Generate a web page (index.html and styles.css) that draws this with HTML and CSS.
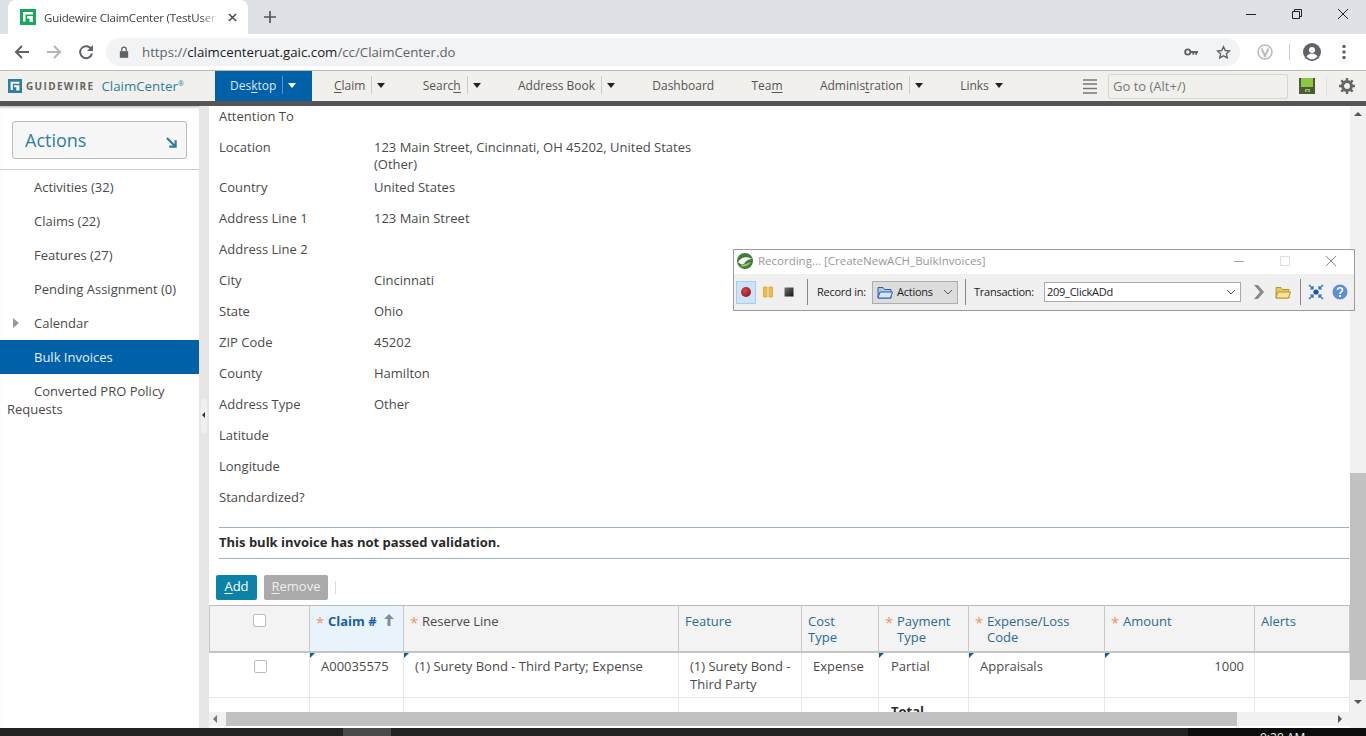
FILE: index.html
```html
<!DOCTYPE html>
<html lang="en">
<head>
    <meta charset="UTF-8">
    <title>Guidewire ClaimCenter</title>
    <link rel="stylesheet" href="styles.css">
</head>
<body>
    <div class="tabstrip">
        <div class="tab">
            <svg class="favicon" viewBox="0 0 16 16"><path fill="#17a85a" d="M0 0h16v16H0z"/><path fill="#fff" d="M3 3h10v2.500H5.500v7H3zM7 7h6v6H9.500V9.500H7z"/></svg>
            <span class="tab-title">Guidewire ClaimCenter (TestUser</span>
            <svg class="tab-close" viewBox="0 0 10 10"><path d="M1 1l8 8M9 1L1 9" stroke="#444" stroke-width="1.6"/></svg>
        </div>
        <svg class="new-tab" viewBox="0 0 12 12"><path d="M6 0v12M0 6h12" stroke="#555" stroke-width="1.7"/></svg>
        <div class="win-btns">
            <svg viewBox="0 0 12 12"><path d="M1 6.500h10" stroke="#222"/></svg>
            <svg viewBox="0 0 12 12"><path d="M1.500 3.500h7v7h-7zM3.500 3.500v-2h7v7h-2" fill="none" stroke="#222"/></svg>
            <svg viewBox="0 0 12 12"><path d="M1 1l10 10M11 1L1 11" stroke="#222"/></svg>
        </div>
    </div>

    <div class="toolbar">
        <svg class="tool-icon" viewBox="0 0 16 16"><path d="M15 8H2M8 2L2 8l6 6" fill="none" stroke="#5f6368" stroke-width="2"/></svg>
        <svg class="tool-icon" viewBox="0 0 16 16"><path d="M1 8h13M8 2l6 6-6 6" fill="none" stroke="#b4b6b9" stroke-width="2"/></svg>
        <svg class="tool-icon" viewBox="0 0 16 16"><path d="M13.500 5.500A6 6 0 1 0 14 9.500" fill="none" stroke="#5f6368" stroke-width="2"/><path fill="#5f6368" d="M15 1v6H9z"/></svg>
        <div class="omnibox">
            <svg class="lock" viewBox="0 0 12 14"><path fill="#5f6368" d="M1 6h10v8H1z"/><path d="M3.300 6V3.800a2.700 2.700 0 0 1 5.400 0V6" fill="none" stroke="#5f6368" stroke-width="1.500"/></svg>
            <span class="url">https://<b>claimcenteruat.gaic.com</b>/cc/ClaimCenter.do</span>
            <svg class="key" viewBox="0 0 16 10"><circle cx="4" cy="5" r="2.800" fill="none" stroke="#5f6368" stroke-width="2"/><path fill="#5f6368" d="M7 4h8v2h-1v2h-2V6h-1v2H9V6H7z"/></svg>
            <svg class="star" viewBox="0 0 16 16"><path d="M8 1.800l1.900 4.100 4.500.5-3.300 3 .9 4.400L8 11.600l-4 2.200.9-4.400-3.300-3 4.500-.5z" fill="none" stroke="#5f6368" stroke-width="1.500"/></svg>
        </div>
        <svg class="ext" viewBox="0 0 16 16"><circle cx="8" cy="8" r="7" fill="none" stroke="#bbb" stroke-width="1.500"/><path d="M4.500 4.500L8 12l3.500-7.500" fill="none" stroke="#bbb" stroke-width="2"/></svg>
        <span class="tool-sep"></span>
        <svg class="avatar" viewBox="0 0 18 18"><circle cx="9" cy="9" r="9" fill="#5f6368"/><circle cx="9" cy="7" r="3" fill="#fff"/><path fill="#fff" d="M3.500 13.500c1-2 3.500-3 5.500-3s4.500 1 5.500 3a7 7 0 0 1-11 0z"/></svg>
        <svg class="kebab" viewBox="0 0 4 14"><path fill="#5f6368" d="M.5 0h3v3h-3zM.5 5.500h3v3h-3zM.5 11h3v3h-3z"/></svg>
    </div>

    <nav class="appnav">
        <div class="brand">
            <svg class="brand-logo" viewBox="0 0 16 16"><path fill="#2d7d9f" d="M0 0h16v16H0z"/><path fill="#fff" d="M3 3h10v2.500H5.500v7H3zM7 7h6v6H9.500V9.500H7z"/></svg>
            <span class="brand-word">GUIDEWIRE</span>
            <span class="brand-product">ClaimCenter<sup>®</sup></span>
        </div>
        <div class="nav-tab">Des<u>k</u>top<span class="nav-sep"></span><span class="caret caret-white"></span></div>
        <div class="nav-items">
            <div class="nav-item"><u>C</u>laim<span class="nav-sep"></span><span class="caret"></span></div>
            <div class="nav-item">Searc<u>h</u><span class="nav-sep"></span><span class="caret"></span></div>
            <div class="nav-item">Address Book<span class="nav-sep"></span><span class="caret"></span></div>
            <div class="nav-item">Dashboard</div>
            <div class="nav-item">Tea<u>m</u></div>
            <div class="nav-item">Adminis<u>t</u>ration<span class="nav-sep"></span><span class="caret"></span></div>
            <div class="nav-item">Links<span class="caret caret-solo"></span></div>
        </div>
        <div class="nav-tools">
            <svg class="burger" viewBox="0 0 14 15"><path d="M0 1h14M0 5h14M0 9.500h14M0 14h14" stroke="#777" stroke-width="1.500"/></svg>
            <div class="goto">Go to (Alt+/)</div>
            <svg class="save" viewBox="0 0 16 16"><path fill="#4b5a3a" d="M0 0h16v16H0z"/><path fill="#8dc63f" d="M2 0h12v9H2z"/><path fill="#8dc63f" d="M6 11h5v3H6z"/><path fill="#4b5a3a" d="M7.500 12h2v1.500h-2z"/></svg>
            <span class="nav-sep nav-sep-tools"></span>
            <svg class="gear" viewBox="0 0 16 16"><circle cx="8" cy="8" r="4.500" fill="none" stroke="#666" stroke-width="3"/><path d="M8 0v3M8 13v3M0 8h3M13 8h3M2.300 2.300l2.100 2.100M11.600 11.600l2.100 2.100M13.700 2.300l-2.100 2.100M4.400 11.600l-2.100 2.100" stroke="#666" stroke-width="2.400"/></svg>
        </div>
    </nav>
    <div class="nav-shadow"></div>

    <div class="main">
        <aside class="sidebar">
            <div class="actions-wrap">
                <div class="actions-btn">
                    <span>Actions</span>
                    <svg class="actions-arrow" viewBox="0 0 12 12"><path d="M1 1l9 9M10.500 3.500v7h-7" fill="none" stroke="#2b7fa3" stroke-width="2.400"/></svg>
                </div>
            </div>
            <ul class="side-list">
                <li>Activities (32)</li>
                <li>Claims (22)</li>
                <li>Features (27)</li>
                <li>Pending Assignment (0)</li>
                <li class="has-arrow">Calendar</li>
                <li class="selected">Bulk Invoices</li>
                <li class="wrapped">Converted PRO Policy Requests</li>
            </ul>
        </aside>
        <div class="splitter"><div class="split-handle"></div></div>
        <div class="content">
            <div class="scroll-area">
                <div class="detail">
                    <div class="row"><span class="lbl">Attention To</span></div>
                    <div class="row row-wrap"><span class="lbl">Location</span><span class="val">123 Main Street, Cincinnati, OH 45202, United States (Other)</span></div>
                    <div class="row"><span class="lbl">Country</span><span class="val">United States</span></div>
                    <div class="row"><span class="lbl">Address Line 1</span><span class="val">123 Main Street</span></div>
                    <div class="row"><span class="lbl">Address Line 2</span></div>
                    <div class="row"><span class="lbl">City</span><span class="val">Cincinnati</span></div>
                    <div class="row"><span class="lbl">State</span><span class="val">Ohio</span></div>
                    <div class="row"><span class="lbl">ZIP Code</span><span class="val">45202</span></div>
                    <div class="row"><span class="lbl">County</span><span class="val">Hamilton</span></div>
                    <div class="row"><span class="lbl">Address Type</span><span class="val">Other</span></div>
                    <div class="row"><span class="lbl">Latitude</span></div>
                    <div class="row"><span class="lbl">Longitude</span></div>
                    <div class="row"><span class="lbl">Standardized?</span></div>
                </div>
                <div class="banner">This bulk invoice has not passed validation.</div>
                <div class="btn-row">
                    <button class="btn btn-add"><u>A</u>dd</button>
                    <button class="btn btn-remove"><u>R</u>emove</button>
                    <span class="btn-sep"></span>
                </div>
                <table class="grid">
                    <colgroup>
                        <col class="c-check"><col class="c-claim"><col class="c-reserve"><col class="c-feature"><col class="c-cost"><col class="c-pay"><col class="c-code"><col class="c-amount"><col class="c-alerts">
                    </colgroup>
                    <thead>
                        <tr>
                            <th class="center"><span class="box box-head"></span></th>
                            <th class="sorted"><span class="req">*</span><span class="sort-name">Claim #</span><svg class="sort-arrow" viewBox="0 0 10 12"><path fill="#8a8a8a" d="M5 0l5 5H6.500v7h-3V5H0z"/></svg></th>
                            <th class="plain"><span class="req">*</span>Reserve Line</th>
                            <th>Feature</th>
                            <th>Cost<br>Type</th>
                            <th class="hang"><span class="req">*</span>Payment Type</th>
                            <th class="hang"><span class="req">*</span>Expense/Loss Code</th>
                            <th class="hang"><span class="req">*</span>Amount</th>
                            <th>Alerts</th>
                        </tr>
                    </thead>
                    <tbody>
                        <tr>
                            <td class="center"><span class="box"></span></td>
                            <td class="edit pad-claim">A00035575</td>
                            <td class="edit pad-reserve">(1) Surety Bond - Third Party; Expense</td>
                            <td class="pad-feature">(1) Surety Bond - Third Party</td>
                            <td class="pad-cost">Expense</td>
                            <td class="edit pad-pay">Partial</td>
                            <td class="edit pad-code">Appraisals</td>
                            <td class="edit num">1000</td>
                            <td></td>
                        </tr>
                        <tr>
                            <td></td><td></td><td></td><td></td><td></td>
                            <td class="pad-pay total">Total</td>
                            <td></td><td></td><td></td>
                        </tr>
                    </tbody>
                </table>
            </div>
            <div class="hscroll">
                <span class="arrow arrow-left"></span>
                <div class="hthumb"></div>
                <span class="arrow arrow-right"></span>
            </div>
        </div>
        <div class="vscroll">
            <span class="arrow arrow-up"></span>
            <div class="vthumb"></div>
            <span class="arrow arrow-down"></span>
        </div>
    </div>

    <div class="taskbar">
        <div class="task-active"></div>
        <div class="tray">9:29 AM</div>
    </div>

    <div class="recorder">
        <div class="rec-title">
            <svg class="rec-logo" viewBox="0 0 16 16"><circle cx="8" cy="8" r="8" fill="#3f7d3a"/><path d="M1 9c3-5 9-6 14-3-2 0-6 1-8 5-2 1-4 0-6-2z" fill="#fff"/><path d="M3 13c3 1 8 1 11-4-3 1-6 2-11 4z" fill="#9ccb5f"/></svg>
            <span class="rec-name">Recording... [CreateNewACH_BulkInvoices]</span>
            <div class="rec-win">
                <svg viewBox="0 0 12 12"><path d="M1 6.500h10" stroke="#aaa"/></svg>
                <svg viewBox="0 0 12 12"><path d="M1.500 1.500h9v9h-9z" fill="none" stroke="#ddd"/></svg>
                <svg viewBox="0 0 12 12"><path d="M1 1l10 10M11 1L1 11" stroke="#888"/></svg>
            </div>
        </div>
        <div class="rec-bar">
            <div class="rec-btn rec-btn-on"><svg class="rec-ico" viewBox="0 0 12 12"><defs><radialGradient id="recRed" cx=".4" cy=".35" r=".7"><stop offset="0" stop-color="#d9434c"/><stop offset="1" stop-color="#8e1a22"/></radialGradient></defs><circle cx="6" cy="6" r="5" fill="url(#recRed)"/></svg></div>
            <svg class="rec-ico rec-pause" viewBox="0 0 12 12"><path fill="#f0bd3c" stroke="#c99a20" stroke-width=".6" d="M1.500 1h3.500v10H1.500zM7 1h3.500v10H7z"/></svg>
            <svg class="rec-ico rec-stop" viewBox="0 0 12 12"><defs><linearGradient id="recStop" x1="0" y1="0" x2="1" y2="1"><stop offset="0" stop-color="#777"/><stop offset="1" stop-color="#111"/></linearGradient></defs><path fill="url(#recStop)" d="M1.500 1.500h9v9h-9z"/></svg>
            <span class="rec-sep rec-sep-1"></span>
            <span class="rec-label rec-label-in">Record in:</span>
            <div class="rec-combo">
                <svg class="rec-folder" viewBox="0 0 16 13"><path d="M1 12V1.500h5l1.500 2H14V12z" fill="#a9c8ee" stroke="#2f5f9e"/><path d="M1 12l2-6h12.500l-2 6z" fill="#d6e6fa" stroke="#2f5f9e"/></svg>
                <span class="rec-text">Actions</span>
                <svg class="chev" viewBox="0 0 10 6"><path d="M1 1l4 4 4-4" fill="none" stroke="#555"/></svg>
            </div>
            <span class="rec-sep rec-sep-2"></span>
            <span class="rec-label rec-label-tr">Transaction:</span>
            <div class="rec-input">
                <span class="rec-text">209_ClickADd</span>
                <svg class="chev" viewBox="0 0 10 6"><path d="M1 1l4 4 4-4" fill="none" stroke="#555"/></svg>
            </div>
            <svg class="rec-go" viewBox="0 0 12 14"><path fill="#8a8a8a" d="M1 0h4l6 7-6 7H1l6-7z"/></svg>
            <svg class="rec-open" viewBox="0 0 16 13"><path d="M1 12V1.500h5l1.500 2H14V12z" fill="#e8c860" stroke="#b8962e"/><path d="M1 12l2-6h12.500l-2 6z" fill="#f8e49a" stroke="#b8962e"/></svg>
            <span class="rec-sep rec-sep-3"></span>
            <svg class="rec-focus" viewBox="0 0 16 16"><circle cx="8" cy="8" r="2.600" fill="#1b4fb0"/><path d="M1 1l4 4M15 1l-4 4M1 15l4-4M15 15l-4-4M5 2v3H2M11 2v3h3M5 14v-3H2M11 14v-3h3" fill="none" stroke="#1b6fc0" stroke-width="1.200"/></svg>
            <svg class="rec-help" viewBox="0 0 16 16"><circle cx="8" cy="8" r="7.500" fill="#5c8fd6"/><path d="M5.500 6c0-3 5-3 5 0 0 2-2.500 1.800-2.500 4" fill="none" stroke="#fff" stroke-width="1.600"/><path fill="#fff" d="M7 11h2v2H7z"/></svg>
        </div>
    </div>
</body>
</html>
```

FILE: styles.css
```css
* {
    box-sizing: border-box;
}
html, body {
    height: 100%;
}
body {
    margin: 0;
    height: 736px;
    overflow: hidden;
    display: flex;
    flex-direction: column;
    font-family: "Open Sans", sans-serif;
    font-size: 13px;
    color: #4a4a4a;
    background: #fff;
    position: relative;
}
svg {
    display: block;
    flex: none;
}

/* browser chrome */
.tabstrip {
    height: 34px;
    flex: none;
    background: #dee1e6;
    display: flex;
    align-items: center;
    padding-left: 8px;
}
.tab {
    width: 240px;
    height: 34px;
    background: #fff;
    border-radius: 8px 8px 0 0;
    display: flex;
    align-items: center;
    padding-left: 12px;
}
.favicon {
    width: 16px;
    height: 16px;
}
.tab-title {
    margin-left: 8px;
    width: 174px;
    font-size: 11.500px;
    letter-spacing: -.2px;
    color: #3c4043;
    white-space: nowrap;
    -webkit-mask-image: linear-gradient(to right, #000 90%, transparent 100%);
    mask-image: linear-gradient(to right, #000 90%, transparent 100%);
}
.tab-close {
    width: 9px;
    height: 9px;
    margin-left: 10px;
}
.new-tab {
    width: 12px;
    height: 12px;
    margin-left: 16px;
}
.win-btns {
    margin-left: auto;
    align-self: flex-start;
    display: flex;
    gap: 34px;
    padding: 8px 17px 0 0;
}
.win-btns svg {
    width: 12px;
    height: 12px;
}
.toolbar {
    height: 36px;
    flex: none;
    background: #fff;
    display: flex;
    align-items: center;
    padding-left: 14px;
}
.tool-icon {
    width: 16px;
    height: 16px;
    margin-right: 16px;
}
.omnibox {
    width: 1134px;
    height: 28px;
    margin-left: -4px;
    border-radius: 14px;
    background: #f1f3f4;
    display: flex;
    align-items: center;
    padding-left: 13px;
}
.lock {
    width: 10px;
    height: 12px;
}
.url {
    margin-left: 13px;
    font-size: 13.250px;
    color: #5f6368;
    white-space: nowrap;
}
.url b {
    font-weight: 400;
    color: #202124;
}
.key {
    width: 15px;
    height: 10px;
    margin-left: auto;
}
.star {
    width: 15px;
    height: 15px;
    margin: 0 9px 0 17px;
}
.ext {
    width: 16px;
    height: 16px;
    margin-left: 17px;
}
.tool-sep {
    width: 1px;
    height: 16px;
    background: #ccc;
    margin-left: 16px;
}
.avatar {
    width: 18px;
    height: 18px;
    margin-left: 13px;
}
.kebab {
    width: 4px;
    height: 14px;
    margin-left: 21px;
}

/* app nav */
.appnav {
    height: 31px;
    flex: none;
    background: #f1f0ec;
    border-top: 1px solid #b9b9b9;
    display: flex;
    align-items: stretch;
    padding-left: 8px;
    font-size: 12px;
}
.nav-shadow {
    height: 5px;
    flex: none;
    background: #555;
}
.brand {
    width: 207px;
    display: flex;
    align-items: center;
    flex: none;
}
.brand-logo {
    width: 14px;
    height: 14px;
}
.brand-word {
    margin-left: 4px;
    font-size: 10px;
    font-weight: 700;
    letter-spacing: 1.350px;
    color: #666;
}
.brand-product {
    margin-left: 7px;
    font-size: 13.300px;
    color: #2b7fa3;
    white-space: nowrap;
}
.brand-product sup {
    font-size: 7px;
    line-height: 0;
}
.nav-tab {
    width: 97px;
    flex: none;
    background: #0060a8;
    color: #dbe8f2;
    display: flex;
    align-items: center;
    padding: 0 0 2px 15px;
}
.nav-items {
    display: flex;
    align-items: center;
    gap: 37.300px;
    margin-left: 22px;
    padding-bottom: 2px;
}
.nav-item {
    display: flex;
    align-items: center;
    white-space: nowrap;
    color: #555;
}
u {
    text-underline-offset: 2px;
}
.nav-sep {
    width: 1px;
    height: 18px;
    background: #ccc;
    margin: 0 5px 0 6px;
}
.nav-tab .nav-sep {
    background: #5c93c2;
}
.caret {
    width: 0;
    height: 0;
    border-left: 4.500px solid transparent;
    border-right: 4.500px solid transparent;
    border-top: 5px solid #222;
}
.caret-white {
    border-top-color: #fff;
}
.caret-solo {
    margin-left: 6px;
}
.nav-tools {
    margin-left: auto;
    display: flex;
    align-items: center;
    padding-right: 11px;
}
.burger {
    width: 14px;
    height: 15px;
}
.goto {
    width: 180px;
    height: 25px;
    margin-left: 11px;
    border: 1px solid #d8d6d0;
    border-radius: 2px;
    padding: 2px 4px 0;
    font-size: 13px;
    color: #777;
}
.save {
    width: 16px;
    height: 16px;
    margin-left: 11px;
}
.nav-sep-tools {
    margin: 0 0 0 11px;
    background: #ddd;
}
.gear {
    width: 16px;
    height: 16px;
    margin-left: 12px;
}

/* page body */
.main {
    flex: 1;
    min-height: 0;
    display: flex;
    background: #fff;
}
.sidebar {
    width: 199px;
    flex: none;
    box-shadow: inset 0 3px 3px -2px rgba(0, 0, 0, .3);
}
.actions-wrap {
    height: 64px;
    padding: 15px 12px 0;
    border-bottom: 1px solid #ccc;
}
.actions-btn {
    height: 38px;
    border: 1px solid #bbb;
    border-radius: 3px;
    background: #f7f7f7;
    display: flex;
    align-items: center;
    justify-content: space-between;
    padding: 0 9px 0 12px;
    font-size: 18px;
    color: #2b7fa3;
}
.actions-arrow {
    width: 11px;
    height: 11px;
    margin-top: 4px;
}
.side-list {
    list-style: none;
    margin: 0;
    padding: 0;
}
.side-list li {
    padding: 8px 7px 8px 34px;
    line-height: 18px;
    position: relative;
}
.side-list .selected {
    background: #0060a8;
    color: #e4eef6;
}
.side-list .wrapped {
    padding-left: 7px;
    text-indent: 27px;
}
.has-arrow::before {
    content: "";
    position: absolute;
    left: 13px;
    top: 12px;
    border-left: 6px solid #999;
    border-top: 5px solid transparent;
    border-bottom: 5px solid transparent;
}
.splitter {
    width: 10px;
    flex: none;
    background: #e6e6e6;
    position: relative;
}
.split-handle {
    position: absolute;
    left: 2px;
    top: 293px;
    width: 6px;
    height: 34px;
    background: #f0f0f0;
    border-radius: 3px;
}
.split-handle::after {
    content: "";
    position: absolute;
    left: 1px;
    top: 13px;
    border-right: 3px solid #333;
    border-top: 3px solid transparent;
    border-bottom: 3px solid transparent;
}
.content {
    width: 1141px;
    flex: none;
    display: flex;
    flex-direction: column;
}
.scroll-area {
    height: 606px;
    overflow: hidden;
}
.detail {
    padding: 2px 0 0 10px;
}
.row {
    display: flex;
    line-height: 17px;
    padding-bottom: 14px;
}
.row-wrap {
    padding-bottom: 6px;
}
.lbl {
    width: 155px;
    flex: none;
}
.val {
    width: 330px;
}
.banner {
    margin: 7px 1px 0 10px;
    height: 32px;
    border-top: 1px solid #9db2c0;
    border-bottom: 1px solid #9db2c0;
    line-height: 29px;
    font-weight: 700;
    color: #2a2a2a;
}
.btn-row {
    display: flex;
    align-items: center;
    gap: 7px;
    margin: 16px 0 5px 7px;
    height: 25px;
}
.btn {
    height: 25px;
    border: 0;
    border-radius: 2px;
    padding: 0 0 4px;
    font-family: inherit;
    font-size: 13px;
    color: #fff;
}
.btn-add {
    width: 41px;
    background: #0b82a6;
}
.btn-remove {
    width: 64px;
    background: #aaa;
    color: #eee;
}
.btn-sep {
    width: 1px;
    height: 13px;
    background: #ddd;
}

/* table */
.grid {
    width: 1141px;
    table-layout: fixed;
    border-collapse: separate;
    border-spacing: 0;
}
.c-check { width: 101px; }
.c-claim { width: 94px; }
.c-reserve { width: 275px; }
.c-feature { width: 123px; }
.c-cost { width: 77px; }
.c-pay { width: 90px; }
.c-code { width: 136px; }
.c-amount { width: 150px; }
.c-alerts { width: 95px; }
.grid th {
    height: 48px;
    padding: 7px 6px 0;
    vertical-align: top;
    text-align: left;
    font-weight: 400;
    line-height: 16px;
    color: #2d6a96;
    background: #f3f3f3;
    border-top: 1px solid #bbb;
    border-bottom: 2px solid #c4c4c4;
    border-right: 1px solid #c8c8c8;
}
.grid th:first-child {
    border-left: 1px solid #c8c8c8;
}
.grid th.plain {
    color: #4a4a4a;
}
.grid th.sorted {
    background: #e8f3fc;
    white-space: nowrap;
}
.grid th.hang {
    padding-left: 18px;
    text-indent: -12px;
}
.grid th.center {
    padding: 8px 0 0 43px;
}
.req {
    color: #f0946c;
    margin-right: 3px;
    display: inline-block;
    width: 9px;
    text-indent: 0;
    font-size: 15px;
    line-height: 14px;
    vertical-align: -2px;
}
.sort-name {
    font-weight: 700;
    color: #1d5f9b;
}
.sort-arrow {
    display: inline-block;
    width: 10px;
    height: 12px;
    margin-left: 7px;
}
.box {
    display: block;
    width: 13px;
    height: 13px;
    border: 1px solid #bbb;
    border-radius: 2px;
    background: #fff;
}
.grid td {
    height: 45px;
    padding: 4px 6px 0;
    vertical-align: top;
    line-height: 18px;
    border-bottom: 1px solid #e8e8e8;
    border-right: 1px solid #e8e8e8;
    position: relative;
}
.grid td.center {
    padding: 7px 0 0 45px;
}
.grid td.edit::before {
    content: "";
    position: absolute;
    left: 0;
    top: 0;
    border-top: 5px solid #0f5f92;
    border-right: 5px solid transparent;
}
.grid .pad-claim { padding-left: 11px; }
.grid .pad-reserve { padding-left: 11px; }
.grid .pad-feature { padding-left: 11px; padding-right: 4px; }
.grid .pad-cost { padding-left: 11px; }
.grid .pad-pay { padding-left: 12px; }
.grid .pad-code { padding-left: 11px; }
.grid .num { text-align: right; padding-right: 10px; }
.grid .total {
    font-weight: 700;
    color: #2a2a2a;
}

/* scrollbars */
.hscroll {
    height: 14px;
    flex: none;
    background: #f1f1f1;
    display: flex;
    align-items: center;
    position: relative;
}
.hthumb {
    width: 1011px;
    height: 14px;
    margin-left: 17px;
    background: #c1c1c1;
}
.vscroll {
    width: 16px;
    flex: none;
    background: #f1f1f1;
    position: relative;
}
.vthumb {
    position: absolute;
    left: 0;
    top: 367px;
    width: 100%;
    height: 207px;
    background: #c1c1c1;
}
.arrow {
    position: absolute;
    width: 0;
    height: 0;
}
.arrow-left {
    left: 4px;
    top: 3px;
    border-right: 4px solid #777;
    border-top: 4px solid transparent;
    border-bottom: 4px solid transparent;
}
.arrow-right {
    right: 8px;
    top: 3px;
    border-left: 4px solid #555;
    border-top: 4px solid transparent;
    border-bottom: 4px solid transparent;
}
.arrow-up {
    left: 4px;
    top: 6px;
    border-bottom: 4px solid #555;
    border-left: 4px solid transparent;
    border-right: 4px solid transparent;
}
.arrow-down {
    left: 4px;
    top: 594px;
    border-top: 4px solid #555;
    border-left: 4px solid transparent;
    border-right: 4px solid transparent;
}

/* taskbar, mostly cut off */
.taskbar {
    height: 8px;
    flex: none;
    background: #222;
    display: flex;
    overflow: hidden;
}
.task-active {
    width: 48px;
    margin-left: 343px;
    background: #4a4a4a;
}
.tray {
    width: 178px;
    margin-left: auto;
    background: #0c0c0c;
    color: #eee;
    font-size: 12px;
    line-height: 16px;
    padding: 2px 0 0 72px;
}

/* recorder window floats over the page */
.recorder {
    position: absolute;
    left: 733px;
    top: 249px;
    width: 622px;
    height: 62px;
    border: 1px solid #9c9c9c;
    background: #f0f0f0;
    font-size: 11px;
    letter-spacing: -.25px;
    color: #222;
}
.rec-title {
    height: 24px;
    background: #fff;
    display: flex;
    align-items: center;
    padding: 0 0 2px 3px;
}
.rec-logo {
    width: 16px;
    height: 16px;
}
.rec-name {
    margin: 0 0 2px 5px;
    font-size: 11.500px;
    letter-spacing: 0;
    color: #999;
}
.rec-win {
    margin-left: auto;
    display: flex;
    gap: 34px;
    padding-right: 17px;
}
.rec-win svg {
    width: 12px;
    height: 12px;
}
.rec-bar {
    height: 36px;
    display: flex;
    align-items: center;
    padding-left: 2px;
}
.rec-btn {
    width: 20px;
    height: 23px;
    display: flex;
    align-items: center;
    justify-content: center;
}
.rec-btn-on {
    background: #cde4f7;
    border: 1px solid #a8cdea;
}
.rec-ico {
    width: 12px;
    height: 12px;
}
.rec-pause {
    margin-left: 6px;
}
.rec-stop {
    margin-left: 9px;
}
.rec-sep {
    width: 1px;
    height: 26px;
    background: #888;
    flex: none;
}
.rec-sep-1 {
    margin: 0 9px 0 12px;
}
.rec-sep-2 {
    margin: 0 8px 0 7px;
}
.rec-sep-3 {
    margin-left: 9px;
}
.rec-label {
    white-space: nowrap;
    flex: none;
    padding-bottom: 2px;
}
.rec-label-in {
    width: 49px;
}
.rec-label-tr {
    width: 59px;
}
.rec-text {
    padding-bottom: 2px;
}
.rec-combo {
    width: 86px;
    height: 23px;
    margin-left: 6px;
    background: #dcdcdc;
    border: 1px solid #adadad;
    display: flex;
    align-items: center;
    padding-left: 4px;
    flex: none;
}
.rec-folder {
    width: 16px;
    height: 13px;
}
.rec-combo span {
    margin-left: 4px;
}
.chev {
    width: 10px;
    height: 6px;
    margin-left: auto;
    margin-right: 4px;
}
.rec-input {
    width: 197px;
    height: 20px;
    margin-left: 11px;
    background: #fff;
    border: 1px solid #a9a9a9;
    display: flex;
    align-items: center;
    padding-left: 2px;
    flex: none;
}
.rec-go {
    width: 12px;
    height: 14px;
    margin-left: 12px;
}
.rec-open {
    width: 16px;
    height: 13px;
    margin-left: 10px;
}
.rec-focus {
    width: 16px;
    height: 16px;
    margin-left: 7px;
}
.rec-help {
    width: 16px;
    height: 16px;
    margin-left: 8px;
}
```
